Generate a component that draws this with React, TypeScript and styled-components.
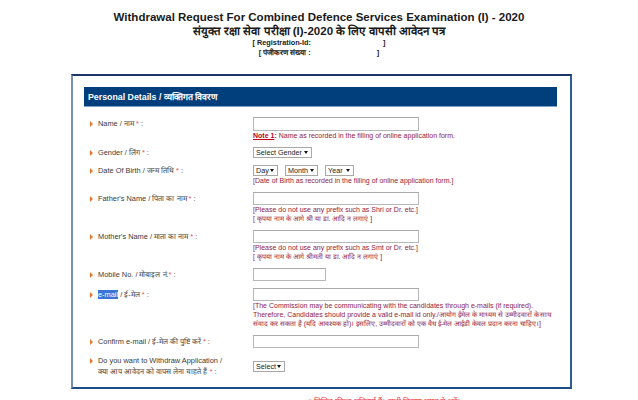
import React from "react";
import styled, { createGlobalStyle } from "styled-components";

const GlobalStyle = createGlobalStyle`
  html, body { margin: 0; padding: 0; background: #ffffff; }
  body { font-family: "Liberation Sans", Tahoma, Arial, sans-serif; color: #333; }
  * { box-sizing: border-box; }
`;

const Page = styled.div`
  width: 638px;
`;

const TitleBlock = styled.div`
  text-align: center;
  padding-top: 10px;
`;

const Title = styled.h1`
  margin: 0;
  font-size: 11.5px;
  line-height: 14px;
  font-weight: bold;
  color: #1a1a1a;
`;

const HindiTitle = styled.h2`
  margin: 0;
  font-size: 11.5px;
  line-height: 14px;
  font-weight: bold;
  color: #1a1a1a;
`;

const RegLine = styled.div`
  font-size: 7.3px;
  line-height: 10px;
  font-weight: bold;
  color: #1a1a1a;
`;

const Blank = styled.span<{ w: number }>`
  display: inline-block;
  width: ${(p) => p.w}px;
`;

const Panel = styled.div`
  margin: 16px 0 0 71px;
  width: 501px;
  border: 2px solid;
  border-color: #1b3566 #2d5c95 #1f4d86 #7391b8;
  padding: 11px 13px 10px 11px;
`;

const SectionHeader = styled.div`
  height: 20px;
  background: #013e7c;
  color: #ffffff;
  font-size: 8.8px;
  font-weight: bold;
  display: flex;
  align-items: center;
  padding-left: 4px;
  border-bottom: 1px solid #7fa0c8;
`;

const Form = styled.div`
  display: flex;
  flex-direction: column;
  gap: 7px;
  padding-top: 10px;
`;

const Row = styled.div<{ center?: boolean }>`
  display: grid;
  grid-template-columns: 169px 1fr;
  align-items: ${(p) => (p.center ? "center" : "start")};
`;

const Label = styled.div<{ lh: number }>`
  display: flex;
  align-items: flex-start;
  padding-left: 6px;
  font-size: 7.4px;
  line-height: ${(p) => p.lh}px;
  color: #3a3a3a;
`;

const Bullet = styled.span<{ lh: number }>`
  flex: none;
  width: 0;
  height: 0;
  margin-top: ${(p) => (p.lh - 6) / 2}px;
  margin-right: 5px;
  border-top: 3px solid transparent;
  border-bottom: 3px solid transparent;
  border-left: 3px solid #e8782c;
`;

const LabelText = styled.span``;

const Req = styled.span`
  color: #f0474f;
`;

const Selected = styled.span`
  background: #3875d7;
  color: #ffffff;
`;

const Control = styled.div`
  display: flex;
  flex-direction: column;
  align-items: flex-start;
`;

const TextInput = styled.input<{ w?: number; h?: number }>`
  display: block;
  width: ${(p) => p.w ?? 166}px;
  height: ${(p) => p.h ?? 14}px;
  margin: 0;
  border: 1px solid #b7b7b7;
  border-top-color: #a9a9a9;
  background: #fff;
  padding: 0 2px;
  font-size: 7px;
  outline: none;
`;

const SelectRow = styled.div`
  display: flex;
  gap: 7px;
`;

const SelectWrap = styled.span<{ w: number }>`
  position: relative;
  display: block;
  width: ${(p) => p.w}px;
  height: 11px;
`;

const Select = styled.select`
  appearance: none;
  -webkit-appearance: none;
  display: block;
  width: 100%;
  height: 11px;
  margin: 0;
  border: 1px solid #a8a8a8;
  border-radius: 0;
  background: #fff;
  padding: 0 0 0 2px;
  font-family: "Liberation Sans", Tahoma, Arial, sans-serif;
  font-size: 7.2px;
  line-height: 9px;
  color: #222;
  outline: none;
`;

const Arrow = styled.span`
  position: absolute;
  right: 4px;
  top: 4px;
  width: 0;
  height: 0;
  border-left: 2px solid transparent;
  border-right: 2px solid transparent;
  border-top: 3px solid #111;
  pointer-events: none;
`;

const Note = styled.div`
  font-size: 7px;
  line-height: 9px;
  color: #94213f;
  white-space: nowrap;
`;

const NoteTag = styled.span`
  color: #c0001e;
  font-weight: bold;
  text-decoration: underline;
`;

const NoteColon = styled.b`
  color: #c0001e;
`;

const Footer = styled.div`
  text-align: center;
  padding-left: 130px;
  margin-top: 8px;
  font-size: 8px;
  line-height: 10px;
  color: #f04040;
`;

type Opt = { w: number; text: string };

const DropDown: React.FC<Opt> = ({ w, text }) => (
  <SelectWrap w={w}>
    <Select defaultValue="">
      <option value="">{text}</option>
    </Select>
    <Arrow />
  </SelectWrap>
);

const FieldLabel: React.FC<{ lh: number; tight?: boolean; children: React.ReactNode }> = ({
  lh,
  tight,
  children,
}) => (
  <Label lh={lh}>
    <Bullet lh={lh} />
    <LabelText>
      {children}
      {tight ? "" : " "}
      <Req>*</Req> :
    </LabelText>
  </Label>
);

export default function App() {
  return (
    <Page>
      <GlobalStyle />
      <TitleBlock>
        <Title>Withdrawal Request For Combined Defence Services Examination (I) - 2020</Title>
        <HindiTitle>संयुक्त रक्षा सेवा परीक्षा (I)-2020 के लिए वापसी आवेदन पत्र</HindiTitle>
        <RegLine>
          [ Registration-Id: <Blank w={70} />]
        </RegLine>
        <RegLine>
          [ पंजीकरण संख्या : <Blank w={64} />]
        </RegLine>
      </TitleBlock>

      <Panel>
        <SectionHeader>Personal Details / व्यक्तिगत विवरण</SectionHeader>
        <Form>
          <Row>
            <FieldLabel lh={14}>Name / नाम</FieldLabel>
            <Control>
              <TextInput type="text" />
              <Note>
                <NoteTag>Note 1</NoteTag>
                <NoteColon>:</NoteColon> Name as recorded in the filling of online application form.
              </Note>
            </Control>
          </Row>

          <Row>
            <FieldLabel lh={11}>Gender / लिंग</FieldLabel>
            <Control>
              <DropDown w={59} text="Select Gender" />
            </Control>
          </Row>

          <Row>
            <FieldLabel lh={11}>Date Of Birth / जन्म तिथि</FieldLabel>
            <Control>
              <SelectRow>
                <DropDown w={25} text="Day" />
                <DropDown w={33} text="Month" />
                <DropDown w={29} text="Year" />
              </SelectRow>
              <Note>[Date of Birth as recorded in the filling of online application form.]</Note>
            </Control>
          </Row>

          <Row>
            <FieldLabel lh={13}>Father's Name / पिता का नाम</FieldLabel>
            <Control>
              <TextInput type="text" h={13} />
              <Note>[Please do not use any prefix such as Shri or Dr. etc.]</Note>
              <Note>[ कृपया नाम के आगे श्री या डा. आदि न लगाएं ]</Note>
            </Control>
          </Row>

          <Row>
            <FieldLabel lh={13}>Mother's Name / माता का नाम</FieldLabel>
            <Control>
              <TextInput type="text" h={13} />
              <Note>[Please do not use any prefix such as Smt or Dr. etc.]</Note>
              <Note>[ कृपया नाम के आगे श्रीमती या डा. आदि न लगाएं ]</Note>
            </Control>
          </Row>

          <Row>
            <FieldLabel lh={13} tight>
              Mobile No. / मोबाइल नं.
            </FieldLabel>
            <Control>
              <TextInput type="text" w={73} h={13} />
            </Control>
          </Row>

          <Row>
            <FieldLabel lh={13}>
              <Selected>e-mail</Selected> / ई-मेल
            </FieldLabel>
            <Control>
              <TextInput type="text" h={13} />
              <Note>[The Commission may be communicating with the candidates through e-mails (if required).</Note>
              <Note>Therefore, Candidates should provide a valid e-mail id only./आयोग ईमेल के माध्यम से उम्मीदवारों के साथ</Note>
              <Note>संवाद कर सकता है (यदि आवश्यक हो)। इसलिए, उम्मीदवारों को एक वैध ई-मेल आईडी केवल प्रदान करना चाहिए।]</Note>
            </Control>
          </Row>

          <Row>
            <FieldLabel lh={13}>Confirm e-mail / ई-मेल की पुष्टि करें</FieldLabel>
            <Control>
              <TextInput type="text" h={13} />
            </Control>
          </Row>

          <Row center>
            <FieldLabel lh={11}>
              Do you want to Withdraw Application /<br />
              क्या आप आवेदन को वापस लेना चाहते हैं
            </FieldLabel>
            <Control>
              <DropDown w={32} text="Select" />
            </Control>
          </Row>
        </Form>
      </Panel>
      <Footer>* चिह्नित फ़ील्ड अनिवार्य हैं। सभी विवरण ध्यान से भरें।</Footer>
    </Page>
  );
}
